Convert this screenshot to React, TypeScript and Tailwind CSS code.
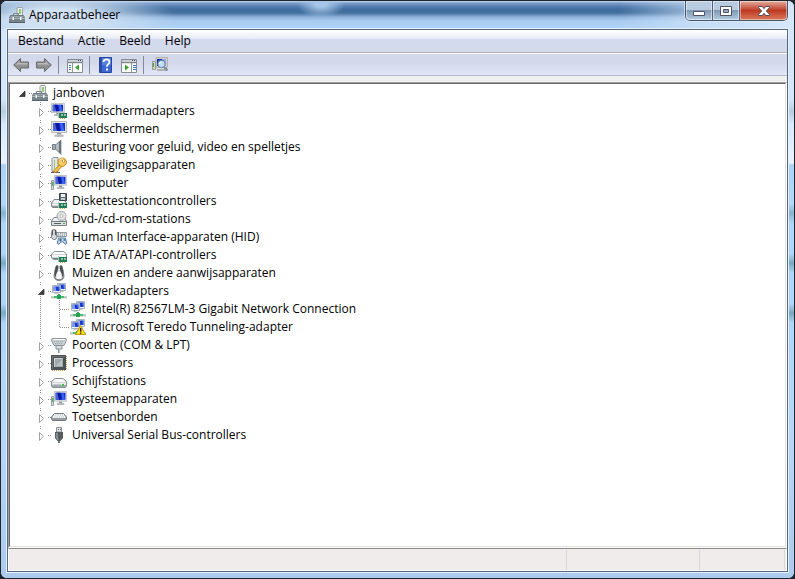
import { useState } from "react";
import type { ReactNode } from "react";

/* ---------- icon parts ---------- */

const Icon = ({ children }: { children: ReactNode }) => (
    <svg width="16" height="16" viewBox="0 0 16 16" className="block shrink-0" aria-hidden="true">
        {children}
    </svg>
);

const Monitor = ({ t = "" }: { t?: string }) => (
    <g transform={t}>
        <path d="M0.500 0.500h15v11h-15z" fill="#e4e7e8" stroke="#b3b9bd" />
        <path d="M2 2h12v8H2z" fill="#1230d0" />
        <path d="M2 2h4l2 8H2z" fill="#4a63d8" />
        <path d="M4 2h4l1 8H6z" fill="#0b17a0" />
        <path d="M9 2h2.500l2 8H10z" fill="#3c62f0" />
        <path d="M6 12h4v1.500H6z" fill="#8b9398" />
        <path d="M3.500 13.500h9v1.500h-9z" fill="#b5bbbe" />
        <path d="M3.500 15h9v.6h-9z" fill="#7f878b" />
    </g>
);

const Card = () => (
    <g>
        <path d="M8 10h8v5H8z" fill="#1f7d56" />
        <path d="M10 11h2v2h-2zM13 11h2v2h-2z" fill="#bfe6c9" />
        <path d="M10.500 11.500h1v1h-1zM13.500 11.500h1v1h-1z" fill="#24473b" />
        <path d="M9 15h1v1H9zM11 15h1v1h-1zM13 15h1v1h-1z" fill="#d2a741" />
        <path d="M7 9h1v6H7z" fill="#b6c2c5" />
    </g>
);

const Drive = () => (
    <g>
        <path d="M3 6.500h10l2.500 3.500v3.500l-1 1h-13l-1-1V10z" fill="#cfd3d5" stroke="#7e8589" />
        <path d="M3.500 7h9l2 3h-13z" fill="#f2f4f4" />
        <path d="M1.500 11h13v1h-13z" fill="#fafbfb" />
        <path d="M1 13h14v1H1z" fill="#8c9295" />
    </g>
);

const Tower = () => (
    <g>
        <path d="M0.500 5.500h2v9h-2z" fill="#d7dbda" stroke="#9aa1a1" />
        <path d="M1 7h1v4H1z" fill="#36b542" />
    </g>
);

const ServerIcon = () => (
    <Icon>
        <path d="M8 1l1-.5h4l.5 1V9H8z" fill="#e9ecea" stroke="#9ba2a2" />
        <path d="M10 2h2v5h-2z" fill="#8ecb70" />
        <path d="M4.500 9V6.500h5V9" fill="none" stroke="#7c868b" />
        <path d="M1.500 8.500h13l1 2.500H.5z" fill="#9ba7ac" stroke="#6f7a80" />
        <path d="M0 11h16v4.500H0z" fill="#76838a" />
        <path d="M0 11h16v1H0z" fill="#a9b4b9" />
        <path d="M3.500 10h1.500v3H3.500zM11 10h1.500v3H11z" fill="#f0f3f3" />
        <path d="M0 15h16v1H0z" fill="#566168" />
    </Icon>
);

const DisplayAdapterIcon = () => (
    <Icon>
        <Monitor t="scale(.86 .82)" />
        <Card />
    </Icon>
);

const DisplayIcon = () => (
    <Icon>
        <Monitor />
    </Icon>
);

const SoundIcon = () => (
    <Icon>
        <path d="M1.500 5.500h3v5h-3z" fill="#a7b0b5" stroke="#717b81" />
        <path d="M4.500 5.500l5-4.500H11v14.500H9.500l-5-5z" fill="#818c92" />
        <path d="M5 6l4-3v10l-4-3z" fill="#b4bdc1" />
        <path d="M8 3l2-2v14l-2-2z" fill="#66737a" />
        <path d="M10 1h1v14h-1z" fill="#c8cdd0" />
    </Icon>
);

const SecurityIcon = () => (
    <Icon>
        <path d="M1 1.500l1-1h5v14H1z" fill="#e3e7e5" stroke="#8b9192" />
        <path d="M3 3h1v9H3z" fill="#8dc777" />
        <path d="M0 15h9v1H0z" fill="#555d5f" />
        <path d="M8.500 7.500l2.500 2-6 6H3v-2z" fill="#f3be46" stroke="#b87816" strokeWidth=".8" />
        <circle cx="11.200" cy="5.200" r="4.200" fill="#f8ce62" stroke="#c78922" />
        <path d="M8.500 3.500c1-1.600 3-2 4.500-1" fill="none" stroke="#fff2b7" />
        <circle cx="12.600" cy="4" r="1.300" fill="#fff" stroke="#b7781d" strokeWidth=".7" />
    </Icon>
);

const ComputerIcon = () => (
    <Icon>
        <Monitor t="translate(3 0) scale(.82 .88)" />
        <Tower />
    </Icon>
);

const FloppyIcon = () => (
    <Icon>
        <Drive />
        <path d="M8.500 0.500h7v7h-7z" fill="#666e73" stroke="#3d4448" />
        <path d="M10 1h4v3h-4z" fill="#eef1f2" />
        <path d="M10 5h4v2h-4z" fill="#c3c9cc" />
        <Card />
    </Icon>
);

const DiscIcon = () => (
    <Icon>
        <Drive />
        <circle cx="10.500" cy="5" r="4.500" fill="#e1e5e6" stroke="#9ba2a5" />
        <path d="M10.500 5L7 2.500A4 4 0 0 1 10.500 1z" fill="#c7e7c6" />
        <path d="M10.500 5l3.800-1.500a4 4 0 0 1-1 4z" fill="#f5dcdd" />
        <circle cx="10.500" cy="5" r="1.500" fill="#fff" stroke="#9aa1a4" strokeWidth=".7" />
        <path d="M0.500 10.500h15v4h-15z" fill="#e0e3e3" stroke="#767d80" />
        <path d="M3 12h7v1H3z" fill="#555d60" />
        <path d="M12 12h2v1h-2z" fill="#45a84c" />
    </Icon>
);

const HidIcon = () => (
    <Icon>
        <path d="M5 3.500h10.500v4H5z" fill="#e2e6e9" stroke="#929a9f" />
        <path d="M7 5h8M7 7h8" stroke="#7b858b" strokeDasharray="1 1" />
        <path d="M1 1.500C1 .5 5 .5 5 1.500l1 6c0 4-5.500 4-5.500 0z" fill="#d3d7d9" stroke="#6b7378" />
        <path d="M1 1h1v5H1zM4 1h1v5H4z" fill="#4d565b" />
        <path d="M7.500 9h7l1.200 5.500-1.700.8-2-2.500h-2l-2 2.500-1.700-.8z" fill="#c9dcec" stroke="#52799e" />
        <path d="M8 11h3M9.500 9.500v3" stroke="#3b6797" />
        <path d="M12.500 10h2v2h-2z" fill="#467bb2" />
    </Icon>
);

const IdeIcon = () => (
    <Icon>
        <path d="M3.500 4.500h9l3 2.500v4l-2 1.500h-11L.5 11V7z" fill="#d1d5d6" stroke="#899094" />
        <path d="M3.500 5h9l2 2h-13z" fill="#fafbfb" />
        <path d="M1 8h14v2H1z" fill="#f5f6f6" />
        <path d="M2 11h12v1H2z" fill="#7c8487" />
        <Card />
    </Icon>
);

const MouseIcon = () => (
    <Icon>
        <path d="M5.500 0.500h5L12 5l1 6c0 6-10 6-10 0l1-6z" fill="#d9dcdd" stroke="#7b8184" />
        <path d="M5 1h2v4l-1.500 4.500L4 13l-.5-3L4 5zM9 1h2l1 4 .5 5-.5 3-1.500-3.500L9 5z" fill="#4a5053" />
        <path d="M7 0h2v5H7z" fill="#f4f5f5" />
        <path d="M7.500 1h1v3h-1z" fill="#7a8184" />
        <ellipse cx="8" cy="10.500" rx="2.600" ry="4" fill="#f9fafa" />
        <path d="M4 13c1.500 2.500 6.500 2.500 8 0" fill="none" stroke="#666b6d" />
    </Icon>
);

const SmallScreen = ({ t }: { t: string }) => (
    <g transform={t}>
        <path d="M0.500 0.500h8v7h-8z" fill="#eef1f3" stroke="#a9b3ba" />
        <path d="M1.500 1.500h6v4.500h-6z" fill="#1636cf" />
        <path d="M1.500 1.500h2l1 4.500h-3z" fill="#7f9bec" />
        <path d="M6 1.500h1.500v4.500H7z" fill="#4a71ee" />
        <path d="M2.500 8h4v1h-4z" fill="#c1c8cc" />
    </g>
);

const NetworkShape = () => (
    <g>
        <SmallScreen t="translate(6 0)" />
        <SmallScreen t="translate(1 2)" />
        <path d="M7 11h2v2H7z" fill="#45ac61" />
        <path d="M0 13h16v2H0z" fill="#c3d3cb" />
        <path d="M3 13h10v2H3z" fill="#3fc06e" />
        <path d="M6 12h4v4H6z" fill="#26a052" />
        <path d="M0 15h6M10 15h6" stroke="#98aaa1" strokeWidth=".6" />
    </g>
);

const NetworkIcon = () => (
    <Icon>
        <NetworkShape />
    </Icon>
);

const NetworkWarningIcon = () => (
    <Icon>
        <NetworkShape />
        <path d="M10.500 6.500l5 9h-10z" fill="#ffdc25" stroke="#c69a11" strokeLinejoin="round" />
        <path d="M10 9h1.400v3.700H10zM10 13.400h1.400v1.300H10z" fill="#30290a" />
    </Icon>
);

const PortIcon = () => (
    <Icon>
        <path d="M1 1.500h14l.5 2-2.500 5H3L.5 3.500z" fill="#c6cdd1" stroke="#8d979c" />
        <path d="M2 2h12v1H2z" fill="#f7f8f8" />
        <path d="M3 4.500h10M4 6.500h8" stroke="#9aa5aa" strokeDasharray="1 1" />
        <path d="M5 8.500h6V12H5z" fill="#d9dee0" stroke="#889197" />
        <path d="M7 12h2v4H7z" fill="#818d93" />
        <path d="M8 12h1v4H8z" fill="#bcc7cc" />
    </Icon>
);

const CpuIcon = () => (
    <Icon>
        <path d="M1 15.500h14M15.500 1v14" stroke="#c79c50" strokeDasharray="1 1" />
        <path d="M0 0h15v15H0z" fill="#4c5154" />
        <path d="M1 1h13v1H1zM1 1h1v13H1z" fill="#6b7174" />
        <path d="M3 3h9v9H3z" fill="#a2a8ab" />
        <path d="M3 3h9v1H3zM3 3h1v9H3z" fill="#cdd2d4" />
        <path d="M5 11l6-6v6z" fill="#bcc1c3" />
    </Icon>
);

const DiskIcon = () => (
    <Icon>
        <path d="M4 5.500h8l3.500 3v5l-1 1h-13l-1-1v-5z" fill="#d3d7d9" stroke="#899094" />
        <path d="M4 6h8l2.500 3h-13z" fill="#f7f8f8" />
        <path d="M1 10h14v2H1z" fill="#eceeee" />
        <path d="M1 12h14v2H1z" fill="#a1a8ab" />
        <path d="M2 11h8v1H2z" fill="#c1c6c7" />
        <path d="M11 11h2v2h-2z" fill="#3dc348" />
    </Icon>
);

const KeyboardIcon = () => (
    <Icon>
        <path d="M3.500 4.500h9l3 3.500v2l-1 1.500h-13l-1-1.500V8z" fill="#c8cccf" stroke="#71797d" />
        <path d="M3 6h10M2 8h12" stroke="#fff" strokeWidth="1.500" strokeDasharray="1.500 .7" />
        <path d="M1 10h14" stroke="#646c70" />
    </Icon>
);

const UsbIcon = () => (
    <Icon>
        <path d="M5.500 0.500h5V5h-5z" fill="#e3e6e8" stroke="#868e92" />
        <path d="M7 2h1v1H7zM9 2h1v1H9z" fill="#596165" />
        <path d="M4 5h8v6l-2.500 3h-3L4 11z" fill="#565c5f" />
        <path d="M5 6h2v5l1 2H6.500L5 11z" fill="#868d90" />
        <path d="M7 14h2v2H7z" fill="#6b7275" />
    </Icon>
);

/* ---------- toolbar icons ---------- */

const ArrowIcon = ({ forward = false }: { forward?: boolean }) => (
    <Icon>
        <g transform={forward ? "translate(16 0) scale(-1 1)" : ""}>
            <path d="M0.700 8L7.500 1.500V5h8v6h-8v3.500z" fill="#929292" stroke="#686868" strokeLinejoin="round" />
            <path d="M2.500 8l4-4v2h8v1.500h-9z" fill="#b9b9b9" />
        </g>
    </Icon>
);

const PanelIcon = ({ right = false }: { right?: boolean }) => (
    <Icon>
        <path d="M0.500 2.500h15v13h-15z" fill="#fcfcfa" stroke="#878c94" />
        <path d="M1 3h14v2H1z" fill="#cbd0d6" />
        <path d="M1 5.500h14" stroke="#7c828b" />
        <path d="M11 3h1v1h-1zM13 3h1v1h-1z" fill="#4c5562" />
        <path d="M1 6.500h14" stroke="#e5e6df" />
        {right ? (
            <>
                <path d="M10.500 6v9" stroke="#91979e" />
                <path d="M12 8.500h3M12 10.500h3M12 12.500h3" stroke="#397bbd" />
                <path d="M4 7.500v6l4-3z" fill="#35a52a" />
            </>
        ) : (
            <>
                <path d="M5.500 6v9" stroke="#91979e" />
                <path d="M2 8.500h2M2 10.500h2M2 12.500h2" stroke="#397bbd" />
                <path d="M12 7.500v6l-4-3z" fill="#35a52a" />
            </>
        )}
    </Icon>
);

const HelpIcon = () => (
    <Icon>
        <path d="M1.500 0.500h12v15h-12z" fill="#3d68d1" stroke="#2446a2" />
        <path d="M2 1h2v14H2z" fill="#2c4fad" />
        <path d="M4 1h9v7H4z" fill="#557fdd" />
        <path d="M5.500 5c0-3.500 6-3.500 6 0 0 2-2.700 2.300-2.700 4.800" fill="none" stroke="#fff" strokeWidth="1.800" />
        <path d="M8 11.500h2v2H8z" fill="#fff" />
    </Icon>
);

const ScanIcon = () => (
    <Icon>
        <path d="M4 0.500h11.500v10H4z" fill="#d5d3cb" stroke="#b5b2a8" />
        <path d="M5 2h9v7H5z" fill="#1226b8" />
        <path d="M10 2h4v7h-2z" fill="#8aa8ee" />
        <path d="M5 12h10v2H5z" fill="#aeb1ac" />
        <path d="M0.500 4.500h3v8h-3z" fill="#d4d8cf" stroke="#939991" />
        <path d="M1 6h1v4H1z" fill="#4a9d4d" />
        <path d="M12 10l3.500 3.500" stroke="#7c8a98" strokeWidth="2" />
        <circle cx="9.500" cy="7" r="3.700" fill="#bfdcf4" stroke="#6282a5" />
        <path d="M7.500 7a2 2 0 0 1 2-2" fill="none" stroke="#fff" />
    </Icon>
);

/* ---------- tree ---------- */

type Device = { name: string; icon: ReactNode; children?: Device[] };

const devices: Device[] = [
    { name: "Beeldschermadapters", icon: <DisplayAdapterIcon /> },
    { name: "Beeldschermen", icon: <DisplayIcon /> },
    { name: "Besturing voor geluid, video en spelletjes", icon: <SoundIcon /> },
    { name: "Beveiligingsapparaten", icon: <SecurityIcon /> },
    { name: "Computer", icon: <ComputerIcon /> },
    { name: "Diskettestationcontrollers", icon: <FloppyIcon /> },
    { name: "Dvd-/cd-rom-stations", icon: <DiscIcon /> },
    { name: "Human Interface-apparaten (HID)", icon: <HidIcon /> },
    { name: "IDE ATA/ATAPI-controllers", icon: <IdeIcon /> },
    { name: "Muizen en andere aanwijsapparaten", icon: <MouseIcon /> },
    {
        name: "Netwerkadapters",
        icon: <NetworkIcon />,
        children: [
            { name: "Intel(R) 82567LM-3 Gigabit Network Connection", icon: <NetworkIcon /> },
            { name: "Microsoft Teredo Tunneling-adapter", icon: <NetworkWarningIcon /> },
        ],
    },
    { name: "Poorten (COM & LPT)", icon: <PortIcon /> },
    { name: "Processors", icon: <CpuIcon /> },
    { name: "Schijfstations", icon: <DiskIcon /> },
    { name: "Systeemapparaten", icon: <ComputerIcon /> },
    { name: "Toetsenborden", icon: <KeyboardIcon /> },
    { name: "Universal Serial Bus-controllers", icon: <UsbIcon /> },
];

const VLine = ({ from = 0, to = 18 }: { from?: number; to?: number }) => (
    <path d={`M8.500 ${from}V${to}`} stroke="#8f8f8f" strokeDasharray="1 1" />
);

const Guide = ({ children }: { children?: ReactNode }) => (
    <svg width="19" height="18" viewBox="0 0 19 18" className="block shrink-0" aria-hidden="true">
        {children}
    </svg>
);

const Expander = ({ open, root = false }: { open: boolean; root?: boolean }) => (
    <Guide>
        {!root && <VLine to={4} />}
        {!root && open && <VLine from={14} />}
        <path d="M16 9.500h3" stroke="#8f8f8f" strokeDasharray="1 1" />
        {open ? (
            <path d="M12 7v5.500H6.500z" fill="#404040" stroke="#262626" strokeWidth=".7" />
        ) : (
            <path d="M7.500 6.500v8l4-4z" fill="#fff" stroke="#a3a3a3" />
        )}
    </Guide>
);

const DeviceLabel = ({ device }: { device: Device }) => (
    <>
        {device.icon}
        <span className="pl-[5px] whitespace-nowrap">{device.name}</span>
    </>
);

const Category = ({ device }: { device: Device }) => {
    const [open, setOpen] = useState(Boolean(device.children));

    return (
        <li role="treeitem" aria-expanded={open} aria-selected={false}>
            <div className="flex h-[18px] items-center pl-[19px]">
                <button type="button" aria-label={device.name} onClick={() => setOpen(!open)}>
                    <Expander open={open} />
                </button>
                <DeviceLabel device={device} />
            </div>
            {open && device.children && (
                <ul role="group">
                    {device.children.map((child, i) => (
                        <li key={child.name} role="treeitem" aria-selected={false} className="flex h-[18px] items-center pl-[19px]">
                            <Guide>
                                <VLine />
                            </Guide>
                            <Guide>
                                <VLine to={i === device.children!.length - 1 ? 10 : 18} />
                                <path d="M9 9.500h10" stroke="#8f8f8f" strokeDasharray="1 1" />
                            </Guide>
                            <DeviceLabel device={child} />
                        </li>
                    ))}
                </ul>
            )}
        </li>
    );
};

/* ---------- window ---------- */

const ToolButton = ({ label, children }: { label: string; children: ReactNode }) => (
    <button type="button" aria-label={label} className="flex h-[22px] w-[23px] items-center justify-center">
        {children}
    </button>
);

const Separator = () => <div className="mr-1 ml-[3px] h-[18px] w-px bg-[#858a99]" />;

const TitleBar = () => (
    <header className="flex h-7 items-start justify-between bg-[radial-gradient(ellipse_120px_32px_at_55px_17px,#d0e1f3_30%,#d0e1f300_100%),radial-gradient(ellipse_24px_14px_at_320px_3px,#a6c5e8_20%,#a6c5e800_100%),linear-gradient(90deg,#d2e5fa00_78%,#d2e5faaa_88%,#d5e7fa_100%),linear-gradient(#c8daf0_0px,#7d9fca_2px,#4e79ab_6px,#3f6c9d_9px,#44719f_12px,#8cb1da_16px,#a8cbef_20px,#b0d4fa_28px)]">
        <div className="flex h-7 items-center gap-1 pl-2">
            <ServerIcon />
            <h1>Apparaatbeheer</h1>
        </div>
        <div className="mr-[6px] flex h-5 rounded-b-[5px] border border-t-0 border-[#46566b] shadow-[0_0_0_1px_#e4effaaa]">
            <button type="button" aria-label="Minimaliseren" className="flex w-[27px] items-center justify-center rounded-bl-[4px] border-r border-[#50627a] bg-linear-to-b from-[#b9cbdf] from-45% via-[#8198b2] via-50% to-[#b5cde3] shadow-[inset_0_0_0_1px_#ffffff80]">
                <svg width="12" height="6" viewBox="0 0 12 6" className="mt-1" aria-hidden="true">
                    <path d="M.5 1.500h11v4H.5z" fill="#fff" stroke="#505365" />
                </svg>
            </button>
            <button type="button" aria-label="Maximaliseren" className="flex w-[27px] items-center justify-center border-r border-[#50627a] bg-linear-to-b from-[#b9cbdf] from-45% via-[#8198b2] via-50% to-[#b5cde3] shadow-[inset_0_0_0_1px_#ffffff80]">
                <svg width="12" height="10" viewBox="0 0 12 10" aria-hidden="true">
                    <path d="M.5.5h11v9H.5z" fill="#fff" stroke="#505365" />
                    <path d="M3.500 3.500h5v3h-5z" fill="#8ea9c3" stroke="#505365" />
                </svg>
            </button>
            <button type="button" aria-label="Sluiten" className="flex w-[47px] items-center justify-center rounded-br-[4px] bg-linear-to-b from-[#e2aca0] from-0% via-[#bd3720] via-50% to-[#d9785a] shadow-[inset_0_0_0_1px_#ffffff70]">
                <svg width="12" height="10" viewBox="0 0 12 10" aria-hidden="true">
                    <path d="M.6.5h3.700L6 2.700 7.700.5h3.700v1.200L8.300 5l3.100 3.300v1.200H7.700L6 7.300 4.300 9.500H.6V8.300L3.700 5 .6 1.700z" fill="#fff" stroke="#534c5b" />
                </svg>
            </button>
        </div>
    </header>
);

export default function App() {
    return (
        <div className="h-screen bg-[#20242b] font-['Open_Sans','Noto_Sans',sans-serif] text-[12px] leading-[18px] text-black">
            <div className="flex h-full flex-col overflow-hidden rounded-[7px] border border-[#20242b] bg-[#b4d5f8]">
                <TitleBar />
                <div className="flex min-h-0 flex-1 bg-[linear-gradient(#d4e6fa_0px,#d4e6fa_70px,#b6cfdf_83px,#d8e9fb_95px,#e9f3fe_134px,#acd1f7_136px,#b5d7fb_175px,#86b3cd_184px,#b0d4fa_194px,#b0d4fa_225px,#78a9bf_234px,#b0d4fa_244px,#b0d4fa_275px,#78a9bf_284px,#b0d4fa_294px,#b6d7fb_400px,#accbed_549px)] px-[6px] pb-[6px]">
                    <main className="flex min-w-0 flex-1 flex-col border border-[#59687a] bg-[#f0f0f0] shadow-[0_0_0_1px_#e5f1fd]">
                        <nav className="flex h-[23px] items-center border-b border-[#b4b0ae] bg-[linear-gradient(#ffffff_0px,#e6ebf5_9px,#d4daed_9px,#d4daed_100%)] pl-[3px]">
                            {["Bestand", "Actie", "Beeld", "Help"].map((item) => (
                                <button key={item} type="button" className="px-[7px]">
                                    {item}
                                </button>
                            ))}
                        </nav>
                        <div role="toolbar" className="flex h-[23px] items-center border-t border-b border-t-white border-b-[#b4b9d0] bg-linear-to-b from-[#d3d8eb] from-40% to-[#e3e8f7] pl-px">
                            <ToolButton label="Vorige">
                                <ArrowIcon />
                            </ToolButton>
                            <ToolButton label="Volgende">
                                <ArrowIcon forward />
                            </ToolButton>
                            <Separator />
                            <ToolButton label="Consolestructuur">
                                <PanelIcon />
                            </ToolButton>
                            <Separator />
                            <ToolButton label="Help">
                                <HelpIcon />
                            </ToolButton>
                            <ToolButton label="Actievenster">
                                <PanelIcon right />
                            </ToolButton>
                            <Separator />
                            <ToolButton label="Zoeken naar gewijzigde apparaten">
                                <ScanIcon />
                            </ToolButton>
                        </div>

                        <div className="mt-[6px] flex min-h-0 flex-1 border border-t-[#a0a0a0] border-r-white border-b-white border-l-[#a0a0a0]">
                            <ul role="tree" className="flex-1 overflow-auto border border-t-[#696969] border-r-[#e3e3e3] border-b-[#e3e3e3] border-l-[#696969] bg-white pl-[3px]">
                                <li role="treeitem" aria-expanded="true" aria-selected={false}>
                                    <div className="flex h-[18px] items-center">
                                        <Expander open root />
                                        <ServerIcon />
                                        <span className="pl-[5px]">janboven</span>
                                    </div>
                                    <ul role="group">
                                        {devices.map((device) => (
                                            <Category key={device.name} device={device} />
                                        ))}
                                    </ul>
                                </li>
                            </ul>
                        </div>

                        <footer className="flex h-[23px] border border-t-[#8b8b8b] border-r-white border-b-white border-l-white bg-[#f0eceb] pr-px">
                            <div className="mt-px flex-1 border-r border-[#d6d6d6]" />
                            <div className="mt-px w-[133px] border-r border-[#d6d6d6]" />
                            <div className="mt-px w-[85px] border-r border-[#d6d6d6]" />
                        </footer>
                    </main>
                </div>
            </div>
        </div>
    );
}
